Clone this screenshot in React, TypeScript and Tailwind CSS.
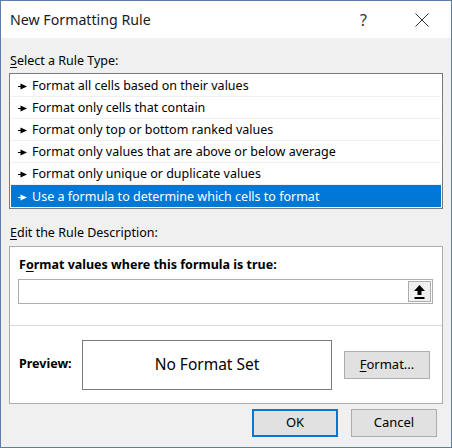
import type { ReactNode } from "react";

const ruleTypes = [
  "Format all cells based on their values",
  "Format only cells that contain",
  "Format only top or bottom ranked values",
  "Format only values that are above or below average",
  "Format only unique or duplicate values",
  "Use a formula to determine which cells to format",
];

const font = "font-['Noto_Sans','Liberation_Sans',sans-serif]";

function Pointer({ selected }: { selected: boolean }) {
  const color = selected ? "#ffffff" : "#000000";
  return (
    <svg width="9" height="7" viewBox="0 0 9 7" className="shrink-0">
      <rect x="0" y="3" width="4" height="1" fill={color} />
      <polygon points="2.5,0.5 9,3.5 2.5,6.5" fill={color} />
    </svg>
  );
}

function Button({ children, primary }: { children: ReactNode; primary?: boolean }) {
  return (
    <div
      className={`flex h-[28px] w-[86px] items-center justify-center bg-[#e1e1e1] text-[13px] text-black ${
        primary ? "border-2 border-[#0078d7]" : "border border-[#adadad]"
      }`}
    >
      {children}
    </div>
  );
}

export default function App() {
  return (
    <div className={`flex h-[448px] w-[452px] flex-col border border-[#5a7ea8] bg-[#f0f0f0] ${font}`}>
      <div className="flex h-[37px] shrink-0 items-center bg-white pl-[9px] pr-[22px] pt-[1px]">
        <span className="text-[14.2px] text-[#1b1b1b]">New Formatting Rule</span>
        <span className="ml-auto mr-[48px] text-[16px] text-[#333]">?</span>
        <svg width="14" height="14" viewBox="0 0 14 14">
          <path d="M0.5 0.5 L13.5 13.5 M13.5 0.5 L0.5 13.5" stroke="#333" strokeWidth="1" />
        </svg>
      </div>

      <div className="flex flex-1 flex-col px-[8px]">
        <div className="mt-[12px] h-[22px] pl-[1px] text-[12.5px] leading-[22px] text-black">
          <span className="underline underline-offset-2">S</span>elect a Rule Type:
        </div>
        <div className="mt-[1px] border border-[#7a7a7a] bg-white p-[1px]">
          {ruleTypes.map((rule, i) => {
            const selected = i === ruleTypes.length - 1;
            return (
              <div
                key={rule}
                className={`flex h-[22px] items-center gap-[5px] pl-[7px] pt-[2px] text-[12.5px] ${
                  selected ? "bg-[#0078d7] text-white" : "border-b border-[#f0f0f0] text-black"
                }`}
              >
                <Pointer selected={selected} />
                <span>{rule}</span>
              </div>
            );
          })}
        </div>

        <div className="mt-[13px] h-[22px] pl-[1px] text-[12.5px] leading-[22px] text-black">
          <span className="underline underline-offset-2">E</span>dit the Rule Description:
        </div>
        <div className="mt-[2px] flex h-[158px] flex-col border border-[#adadad] bg-white">
          <div className="px-[8px] pt-[8px]">
            <div className="h-[20px] pl-[1px] text-[12.5px] font-bold leading-[20px] text-black">
              F<span className="underline underline-offset-2">o</span>rmat values where this formula is true:
            </div>
            <div className="mt-[4px] flex h-[25px] w-[415px] items-stretch border border-[#adadad] bg-white">
              <div className="flex-1" />
              <div className="m-[1px] flex w-[23px] items-center justify-center border border-[#adadad] bg-[#f0f0f0]">
                <svg width="11" height="14" viewBox="0 0 11 14">
                  <polygon points="5.5,0 11,6 7.5,6 7.5,10 3.5,10 3.5,6 0,6" fill="#000" />
                  <rect x="0.5" y="12" width="10" height="2" fill="#000" />
                </svg>
              </div>
            </div>
          </div>
          <div className="mt-[21px] border-t border-[#d9d9d9]" />
          <div className="flex flex-1 items-center px-[9px]">
            <span className="w-[63px] text-[12.5px] font-bold text-black">Preview:</span>
            <div className="flex h-[50px] w-[250px] items-center justify-center border border-[#7a7a7a] text-[15.5px] text-black">
              No Format Set
            </div>
            <div className="ml-[12px]">
              <Button>
                <span>
                  <span className="underline underline-offset-2">F</span>ormat...
                </span>
              </Button>
            </div>
          </div>
        </div>

        <div className="mt-[5px] flex justify-end gap-[13px] pr-[6px]">
          <Button primary>OK</Button>
          <Button>Cancel</Button>
        </div>
      </div>
    </div>
  );
}
